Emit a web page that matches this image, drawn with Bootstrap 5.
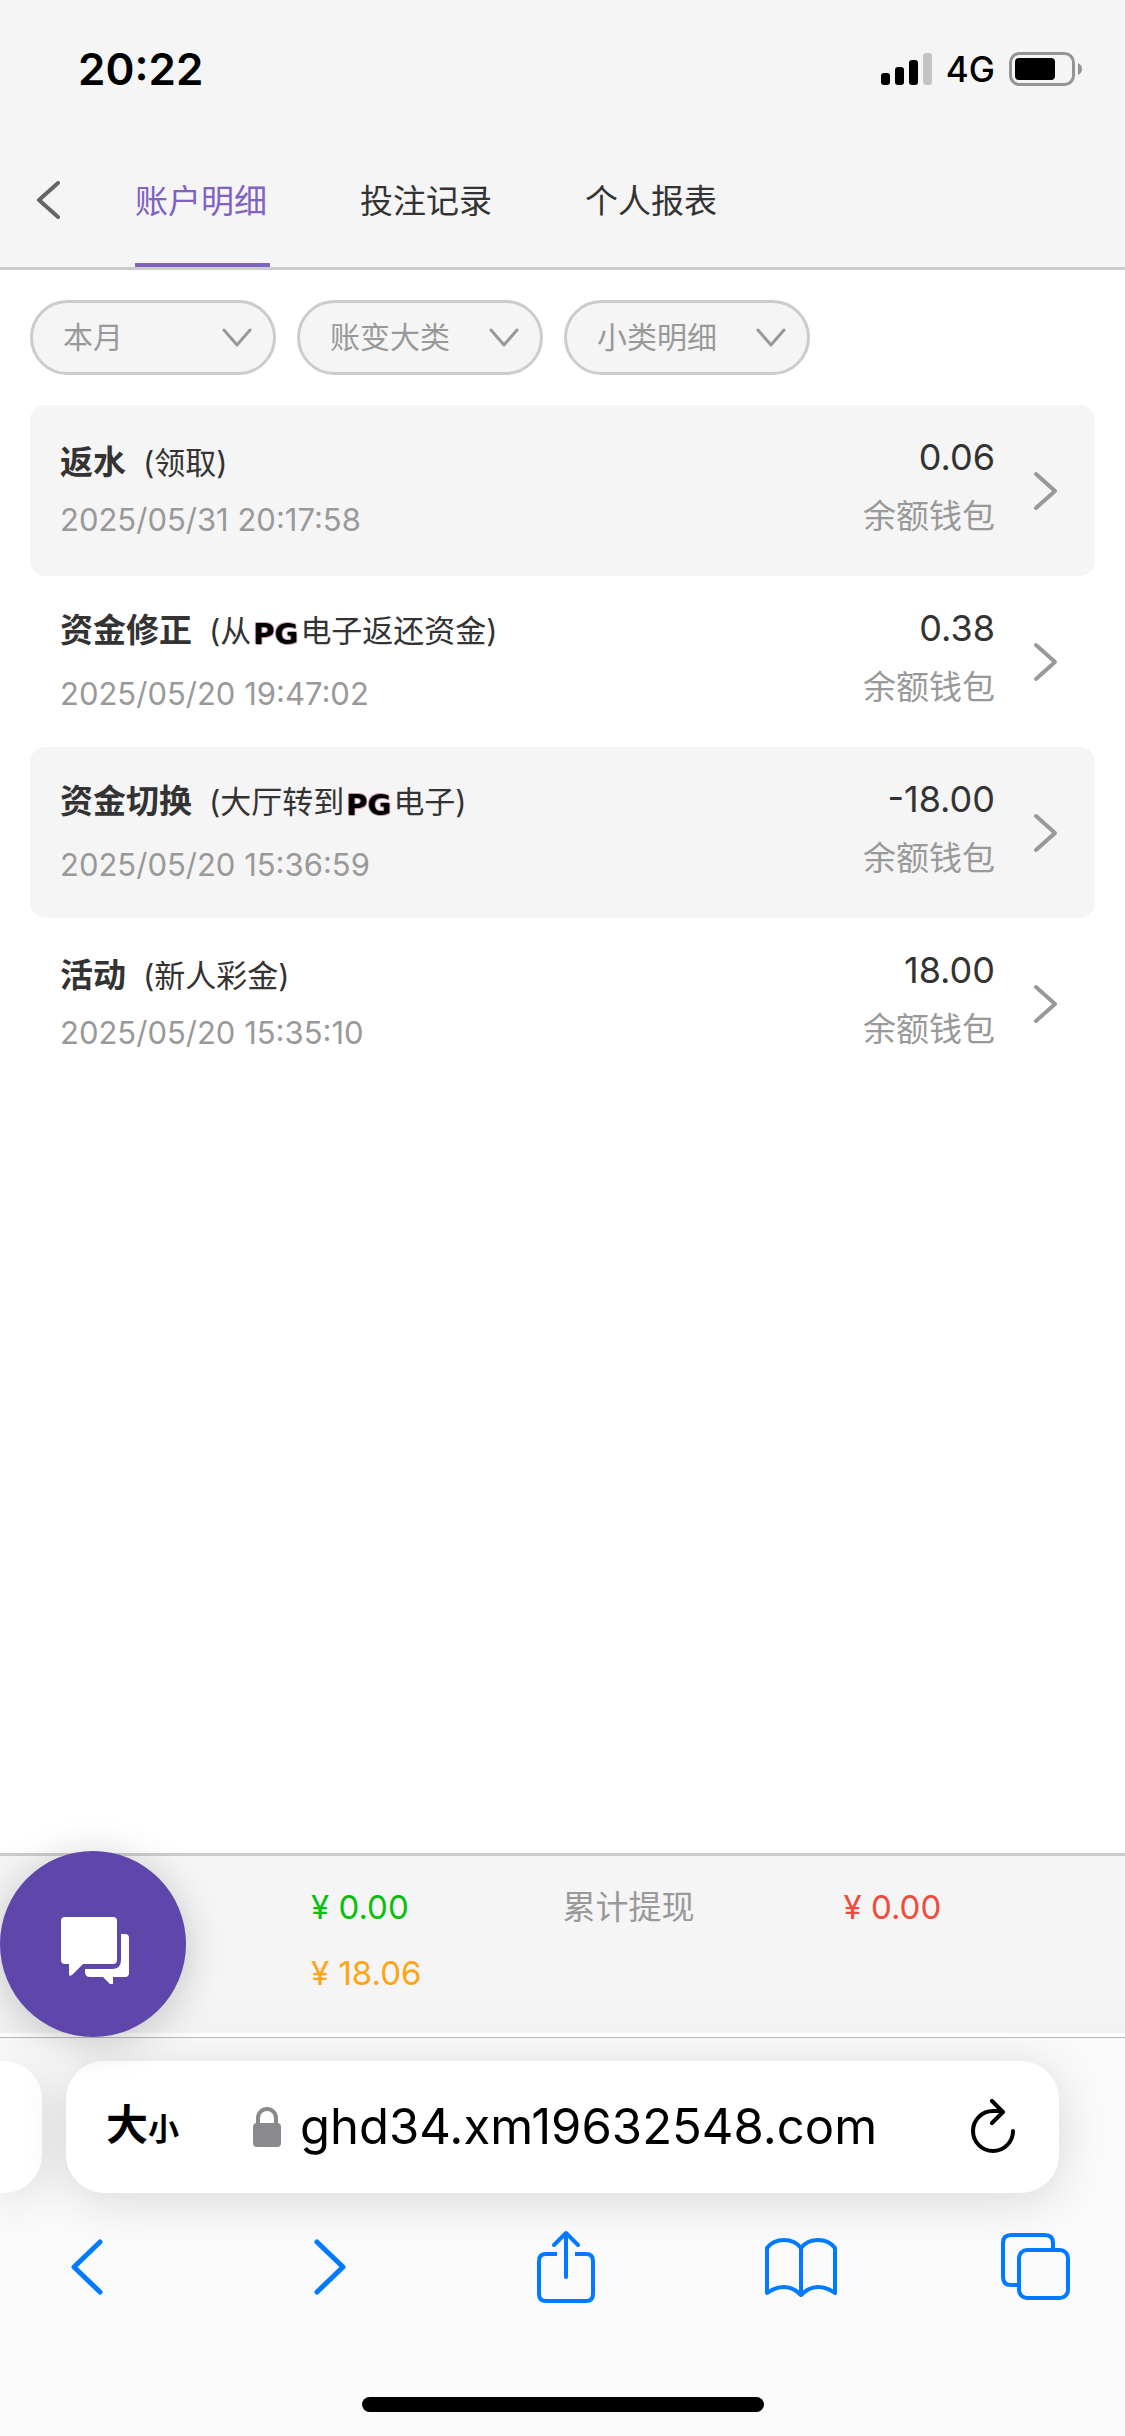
<!DOCTYPE html>
<html lang="zh-CN">
<head>
<meta charset="utf-8">
<meta name="viewport" content="width=device-width, initial-scale=1">
<title>账户明细</title>
<link href="https://cdn.jsdelivr.net/npm/bootstrap@5.3.0/dist/css/bootstrap.min.css" rel="stylesheet">
<style>
  :root {
    --ink: #333;
    --muted: #999;
    --line: #ccc;
    --panel: #f5f5f5;
    --violet: #7f62c2;
    --ios-blue: #007aff;
  }
  body { font-family: Inter, "Noto Sans CJK SC", sans-serif; color: var(--ink); background: #fff; }
  svg { display: block; flex: none; }

  /* status bar and tabs */
  .top-panel { background: var(--panel); border-bottom: 3px solid var(--line); }
  .status-bar { height: 133px; padding: 4px 42px 0 78px; color: #000; }
  .status-bar time { font-size: 44px; line-height: 52px; font-weight: 600; }
  .status-bar .carrier { font-size: 35px; line-height: 40px; font-weight: 500; }
  .status-icons { gap: 14px; }
  .tab-row { height: 134px; padding-left: 36px; }
  .tab-back { width: 99px; }
  .tab-list { gap: 90px; }
  .tab-link { min-width: 135px; color: var(--ink); font-size: 33px; line-height: 50px; padding-top: 6px; border-bottom: 4px solid transparent; text-decoration: none; display: flex; align-items: center; }
  .tab-link.active { color: var(--violet); border-bottom-color: var(--violet); }

  /* filters */
  .filters { padding: 30px; gap: 21px; }
  .filter-pill {
    width: 246px; height: 75px; padding: 0 60px 2px 30px; border: 3px solid var(--line); border-radius: 38px;
    font-size: 30px; line-height: 42px; color: var(--muted); background-color: var(--panel);
    background-image: url("data:image/svg+xml,%3Csvg xmlns='http://www.w3.org/2000/svg' viewBox='0 0 30 20'%3E%3Cpath d='M2 2l13 15L28 2' fill='none' stroke='%23999' stroke-width='3' stroke-linecap='round' stroke-linejoin='round'/%3E%3C/svg%3E");
    background-size: 30px 20px; background-position: right 21px center;
  }

  /* records */
  .records { padding: 0 30px; }
  .record { min-height: 171px; padding: 0 36px 0 30px; border-radius: 15px; color: var(--ink); text-decoration: none; }
  .record:nth-child(odd) { background: var(--panel); }
  .record-kind { font-size: 33px; font-weight: 600; margin-right: 17px; }
  .record-line { line-height: 51px; }
  .record-line.tall { line-height: 58px; }
  .record-note { font-size: 31px; }
  .record-date { font-size: 31px; color: var(--muted); }
  .record-sum { line-height: 59px; margin-right: 38px; padding-bottom: 7px; }
  .record-amount { font-size: 36px; }
  .record-wallet { font-size: 33px; color: var(--muted); }
  .pg-logo { font-family: "DejaVu Sans", sans-serif; font-weight: 700; font-size: 29px; color: #000; line-height: 1; margin: 0 2px; vertical-align: -2px;
    text-shadow: -1px -1px 0 #6a2bff55, 1px 1px 0 #ff3b3b77, -1px 1px 0 #19c8ff66, 1px -1px 0 #ff8a0066; }

  /* totals */
  .totals { border-top: 3px solid var(--line); background: linear-gradient(#f5f5f5 75%, #f2f2f2); border-bottom: 4px solid #fdfdfd; padding: 18px 30px 27px; font-size: 33px; line-height: 66px; }
  .total-label { flex: 0 0 281px; color: var(--muted); }
  .c-green { color: #0abf0a; }
  .c-orange { color: #ffa514; }
  .c-red { color: #f04b3c; }
  .chat-fab { left: 0; bottom: -4px; width: 186px; height: 186px; background: #5f46ab; box-shadow: 0 6px 42px rgba(0,0,0,.2); padding: 0; border: 0; }

  /* browser chrome */
  .browser { border-top: 1px solid #b9b9bb; background: #fafafa; color: #000; }
  .address-row { padding: 23px 66px 0 0; gap: 24px; overflow: hidden; height: 202px; }
  .address-card { background: #fff; height: 132px; border-radius: 38px; box-shadow: 0 6px 48px rgba(0,0,0,.14); }
  .address-peek { flex: 0 0 42px; border-radius: 0 38px 38px 0; }
  .address-main { min-width: 0; padding: 0 43px 0 40px; }
  .text-size { flex: none; white-space: nowrap; font-weight: 700; font-size: 42px; line-height: 60px; color: #000; margin-right: 74px; }
  .text-size span { font-size: 31px; }
  .address-input { width: 0; font-size: 49px; line-height: 62px; color: #000; background: transparent; border: 0; padding: 0; margin: 0 30px 0 19px; }
  .toolbar { padding: 0 52px 0 50px; margin-top: -11px; height: 76px; }
  .tool-link { width: 74px; display: flex; justify-content: center; }
  .home-bar { width: 402px; height: 15px; border-radius: 8px; background: #000; margin: 92px auto 24px; }
</style>
</head>
<body class="d-flex flex-column min-vh-100">

<header class="top-panel">
  <div class="status-bar d-flex align-items-center justify-content-between">
    <time>20:22</time>
    <div class="status-icons d-flex align-items-center">
      <svg width="51" height="32" viewBox="0 0 51 32" aria-hidden="true">
        <rect x="0" y="20" width="9" height="12" rx="3"/><rect x="14" y="14" width="9" height="18" rx="3"/>
        <rect x="28" y="7" width="9" height="25" rx="3"/><rect x="42" y="0" width="9" height="32" rx="3" fill="#c4c4c4"/>
      </svg>
      <span class="carrier">4G</span>
      <svg width="74" height="34" viewBox="0 0 74 34" aria-hidden="true">
        <rect x="1.5" y="1.5" width="63" height="31" rx="9" fill="none" stroke="#949494" stroke-width="3"/>
        <rect x="6" y="6" width="40" height="22" rx="4"/>
        <path d="M69 11q4 2 4 6t-4 6z" fill="#949494"/>
      </svg>
    </div>
  </div>
  <nav class="tab-row d-flex">
    <a href="#" class="tab-back d-flex align-items-center" aria-label="返回">
      <svg width="24" height="38" viewBox="0 0 24 38"><path d="M22 2L3 19l19 17" fill="none" stroke="#666" stroke-width="4" stroke-linecap="round" stroke-linejoin="round"/></svg>
    </a>
    <div class="tab-list d-flex">
      <a href="#" class="tab-link active" aria-current="page">账户明细</a>
      <a href="#" class="tab-link">投注记录</a>
      <a href="#" class="tab-link">个人报表</a>
    </div>
  </nav>
</header>

<main class="flex-grow-1">
  <form class="filters d-flex">
    <select class="form-select filter-pill" aria-label="时间"><option>本月</option></select>
    <select class="form-select filter-pill" aria-label="账变大类"><option>账变大类</option></select>
    <select class="form-select filter-pill" aria-label="小类明细"><option>小类明细</option></select>
  </form>

  <div class="records">
    <a href="#" class="record d-flex align-items-center">
      <div class="flex-grow-1">
        <div class="record-line"><span class="record-kind">返水</span><span class="record-note">(领取)</span></div>
        <div class="record-line record-date">2025/05/31 20:17:58</div>
      </div>
      <div class="record-sum text-end">
        <div class="record-amount">0.06</div>
        <div class="record-wallet">余额钱包</div>
      </div>
      <svg width="26" height="40" viewBox="0 0 26 40"><path d="M3 3l19 17L3 37" fill="none" stroke="#999" stroke-width="4" stroke-linecap="round" stroke-linejoin="round"/></svg>
    </a>
    <a href="#" class="record d-flex align-items-center">
      <div class="flex-grow-1">
        <div class="record-line tall"><span class="record-kind">资金修正</span><span class="record-note">(从<span class="pg-logo">PG</span>电子返还资金)</span></div>
        <div class="record-line tall record-date">2025/05/20 19:47:02</div>
      </div>
      <div class="record-sum text-end">
        <div class="record-amount">0.38</div>
        <div class="record-wallet">余额钱包</div>
      </div>
      <svg width="26" height="40" viewBox="0 0 26 40"><path d="M3 3l19 17L3 37" fill="none" stroke="#999" stroke-width="4" stroke-linecap="round" stroke-linejoin="round"/></svg>
    </a>
    <a href="#" class="record d-flex align-items-center">
      <div class="flex-grow-1">
        <div class="record-line tall"><span class="record-kind">资金切换</span><span class="record-note">(大厅转到<span class="pg-logo">PG</span>电子)</span></div>
        <div class="record-line tall record-date">2025/05/20 15:36:59</div>
      </div>
      <div class="record-sum text-end">
        <div class="record-amount">-18.00</div>
        <div class="record-wallet">余额钱包</div>
      </div>
      <svg width="26" height="40" viewBox="0 0 26 40"><path d="M3 3l19 17L3 37" fill="none" stroke="#999" stroke-width="4" stroke-linecap="round" stroke-linejoin="round"/></svg>
    </a>
    <a href="#" class="record d-flex align-items-center">
      <div class="flex-grow-1">
        <div class="record-line"><span class="record-kind">活动</span><span class="record-note">(新人彩金)</span></div>
        <div class="record-line record-date">2025/05/20 15:35:10</div>
      </div>
      <div class="record-sum text-end">
        <div class="record-amount">18.00</div>
        <div class="record-wallet">余额钱包</div>
      </div>
      <svg width="26" height="40" viewBox="0 0 26 40"><path d="M3 3l19 17L3 37" fill="none" stroke="#999" stroke-width="4" stroke-linecap="round" stroke-linejoin="round"/></svg>
    </a>
  </div>
</main>

<section class="totals position-relative">
  <div class="row g-0">
    <div class="col-6 d-flex"><span class="total-label"></span><span class="c-green">¥ 0.00</span></div>
    <div class="col-6 d-flex"><span class="total-label">累计提现</span><span class="c-red">¥ 0.00</span></div>
    <div class="col-6 d-flex"><span class="total-label"></span><span class="c-orange">¥ 18.06</span></div>
  </div>
  <button type="button" class="chat-fab position-absolute rounded-circle d-flex align-items-center justify-content-center" aria-label="客服">
    <svg width="72" height="80" viewBox="0 0 72 80" fill="#fff">
      <g transform="translate(3 13)">
        <path d="M5 0h48q4 0 4 4v39q0 4-4 4H23L12 58q-3 2-3-1V47H5q-4 0-4-4V4q0-4 4-4z"/>
        <path d="M61 17h4q4 0 4 4v35q0 4-4 4H53v6q0 3-3 1l-7-7H30q-5 0-5-5v-3h27q9 0 9-9z"/>
      </g>
    </svg>
  </button>
</section>

<footer class="browser">
  <div class="address-row d-flex">
    <div class="address-card address-peek"></div>
    <div class="address-card address-main flex-grow-1 d-flex align-items-center">
      <button type="button" class="btn p-0 border-0 text-size">大<span>小</span></button>
      <svg width="28" height="40" viewBox="0 0 28 40" fill="#8a8a8e" aria-hidden="true">
        <rect x="0" y="16" width="28" height="24" rx="4"/>
        <path d="M5 18v-7a9 9 0 0 1 18 0v7" fill="none" stroke="#8a8a8e" stroke-width="4"/>
      </svg>
      <input class="address-input flex-grow-1" type="text" value="ghd34.xm19632548.com" aria-label="网址">
      <button type="button" class="btn p-0 border-0" aria-label="刷新">
        <svg width="46" height="56" viewBox="0 0 46 56" fill="none" stroke="#000" stroke-width="4" stroke-linecap="round" stroke-linejoin="round"><path d="M43 32a20 20 0 1 1-20-20h9M22 2l11 11L22 24"/></svg>
      </button>
    </div>
  </div>
  <nav class="toolbar d-flex align-items-center justify-content-between">
    <a class="tool-link" href="#" aria-label="后退"><svg width="34" height="58" viewBox="0 0 34 58" fill="none" stroke="#007aff" stroke-width="5" stroke-linecap="round" stroke-linejoin="round"><path d="M30 4L4 29l26 25"/></svg></a>
    <a class="tool-link ms-2" href="#" aria-label="前进"><svg width="34" height="58" viewBox="0 0 34 58" fill="none" stroke="#007aff" stroke-width="5" stroke-linecap="round" stroke-linejoin="round"><path d="M4 4l26 25L4 54"/></svg></a>
    <a class="tool-link" href="#" aria-label="分享"><svg width="58" height="74" viewBox="0 0 58 74" fill="none" stroke="#007aff" stroke-width="4" stroke-linecap="round" stroke-linejoin="round"><path d="M20 24H9q-7 0-7 7v33q0 7 7 7h40q7 0 7-7V31q0-7-7-7H38" stroke-linecap="butt"/><path d="M29 47V3M17 15L29 3l12 12"/></svg></a>
    <a class="tool-link" href="#" aria-label="书签"><svg width="74" height="62" viewBox="0 0 74 62" fill="none" stroke="#007aff" stroke-width="4" stroke-linecap="round" stroke-linejoin="round"><path d="M37 12Q31 4 20 4T3 12v45q8-6 17-6t17 8q8-8 17-8t17 6V12Q65 4 54 4T37 12zM37 12v46"/></svg></a>
    <a class="tool-link" href="#" aria-label="标签页"><svg width="70" height="68" viewBox="0 0 70 68" fill="none" stroke="#007aff" stroke-width="4" stroke-linejoin="round"><path d="M17 52h-7q-8 0-8-8V10q0-8 8-8h34q8 0 8 8v7"/><rect x="18" y="17" width="49" height="48" rx="8"/></svg></a>
  </nav>
  <div class="home-bar"></div>
</footer>

<script src="https://cdn.jsdelivr.net/npm/bootstrap@5.3.0/dist/js/bootstrap.bundle.min.js"></script>
</body>
</html>
